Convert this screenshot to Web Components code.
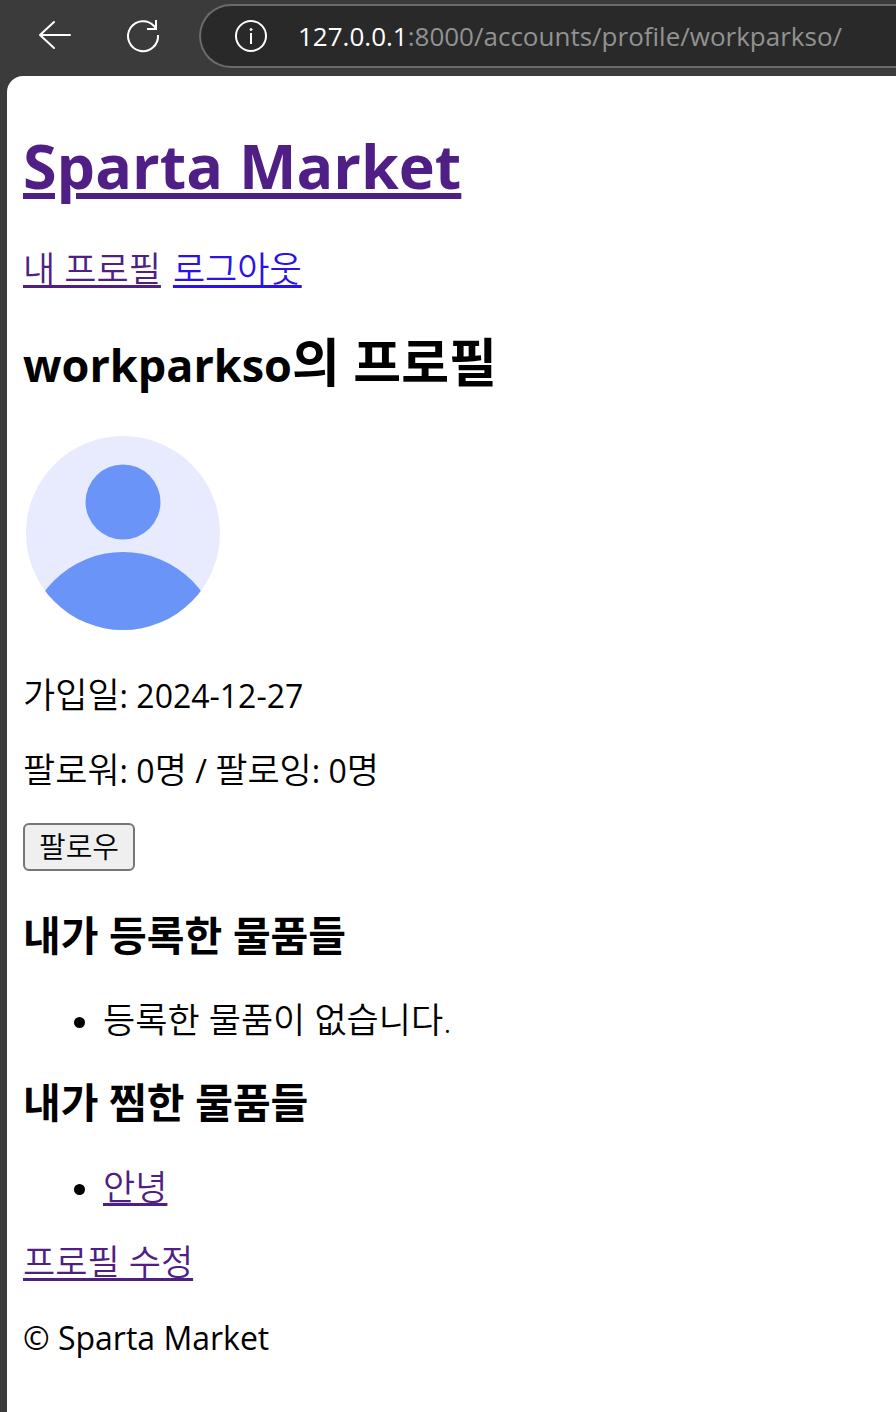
<!DOCTYPE html>
<html lang="ko">
<head>
<meta charset="utf-8">
<meta name="viewport" content="width=device-width, initial-scale=1">
<title>Sparta Market</title>
<style>
  html { background: #3b3b3b; }
  body { margin: 0; font-family: "Open Sans", "Noto Sans CJK KR", sans-serif; font-size: 32px; line-height: 43px; color: #000; }
</style>
</head>
<body>
<browser-window>
  <browser-toolbar slot="toolbar" host="127.0.0.1" path=":8000/accounts/profile/workparkso/"></browser-toolbar>
  <market-page>
    <user-profile>
      <item-list slot="items">
        <hangul-text slot="title">내가 등록한 물품들</hangul-text>
        <hangul-text>등록한 물품이 없습니다.</hangul-text>
      </item-list>
      <item-list slot="items">
        <hangul-text slot="title">내가 찜한 물품들</hangul-text>
        <page-link to="/articles/1/">안녕</page-link>
      </item-list>
    </user-profile>
  </market-page>
</browser-window>

<script>
const define = (name, html, setup) => {
  const template = document.createElement('template');
  template.innerHTML = html.trim();
  customElements.define(name, class extends HTMLElement {
    constructor() {
      super();
      this.attachShadow({ mode: 'open' }).append(template.content.cloneNode(true));
    }
    connectedCallback() { if (setup) setup(this, this.shadowRoot); }
  });
};

define('hangul-text', `
  <style>:host { display: inline; font-size: var(--hangul-size, 35px); font-weight: var(--hangul-weight, 350); line-height: 20px; }</style><slot></slot>`);

define('page-link', `
  <style>
    :host { display: inline; font-size: var(--hangul-size, 35px); font-weight: 350; line-height: 20px; }
    a { color: var(--link-color, #4f1f85); text-decoration: underline 3px; text-underline-offset: 3px; text-decoration-skip-ink: none; }
  </style><a href="#"><slot></slot></a>`,
  (el, root) => { root.querySelector('a').href = el.getAttribute('to'); });

define('browser-window', `
  <style>
    :host { display: flex; flex-direction: column; min-height: 100vh; }
    main { flex: 1; margin-left: 7px; padding: 47px 16px 16px; background: #fff; border-top-left-radius: 16px; }
  </style>
  <slot name="toolbar"></slot><main><slot></slot></main>`);

define('browser-toolbar', `
  <style>
    :host { display: flex; align-items: flex-start; height: 72px; padding: 4px 0 0 35px; overflow: hidden; color: #fff; }
    button { padding: 0; border: 0; background: none; color: inherit; width: 40px; height: 64px; margin-right: 48px; }
    .reload { margin-right: 36px; }
    svg { display: block; fill: none; stroke: currentColor; stroke-width: 2; stroke-linecap: round; stroke-linejoin: round; }
    .bar { flex: 1; display: flex; align-items: center; box-sizing: border-box; height: 64px; padding-left: 30px; border: 2px solid #6b6b6b; border-right: 0; border-radius: 32px 0 0 32px; background: #292929; }
    .info { margin-right: 27px; height: 60px; }
    .address { flex: 1; font-size: 26px; line-height: 36px; white-space: nowrap; color: #929292; outline: 0; }
    .host { color: #fff; }
  </style>
  <button aria-label="뒤로"><svg width="40" height="64" viewBox="0 0 40 64"><path d="M35 31H5M19 18L5 31l14 13"/></svg></button>
  <button class="reload" aria-label="새로 고침"><svg width="40" height="64" viewBox="0 0 40 64"><path stroke-linecap="butt" stroke-linejoin="miter" d="M35 31A15 15 0 1 1 31.500 22.500L33 25M33 16v9h-9"/></svg></button>
  <div class="bar">
    <button class="info" aria-label="사이트 정보"><svg width="40" height="60" viewBox="0 0 40 60"><circle cx="20" cy="30" r="15"/><path stroke-linecap="butt" d="M20 27v11"/><circle cx="20" cy="23.500" r="1" fill="currentColor" stroke-width="1"/></svg></button>
    <div class="address" role="textbox" aria-label="주소" contenteditable="true" spellcheck="false"><span class="host"></span><span class="path"></span></div>
  </div>`,
  (el, root) => {
    root.querySelector('.host').textContent = el.getAttribute('host');
    root.querySelector('.path').textContent = el.getAttribute('path');
  });

define('market-page', `
  <style>
    :host { display: block; }
    h1 { margin: 0 0 40px; font-size: 61px; line-height: 85px; }
    h1 a { color: #4f1f85; text-decoration: underline 6px; text-underline-offset: 4px; }
    nav ul { display: flex; gap: 12px; margin: 0; padding: 0; list-style: none; }
    .logout { --link-color: #2b12e8; }
    footer { margin-top: 32px; }
  </style>
  <header><h1><a href="/">Sparta Market</a></h1>
  <nav><ul><li><page-link to="/accounts/profile/workparkso/">내 프로필</page-link></li><li><page-link class="logout" to="/accounts/logout/">로그아웃</page-link></li></ul></nav></header>
  <slot></slot>
  <footer>© Sparta Market</footer>`);

define('profile-avatar', `
  <style>:host { display: block; width: 200px; height: 200px; } svg { display: block; }</style>
  <svg width="200" height="200" viewBox="0 0 200 200" role="img" aria-label="프로필 이미지">
    <clipPath id="c"><circle cx="100" cy="100" r="97"/></clipPath>
    <circle cx="100" cy="100" r="97" fill="#e8ebfd"/>
    <g clip-path="url(#c)" fill="#6a94f8"><circle cx="100" cy="69" r="37.5"/><circle cx="100" cy="216.500" r="97.500"/></g>
  </svg>`);

define('user-profile', `
  <style>
    :host { display: block; margin-top: 42px; }
    h2 { margin: 0 0 36px; font-size: 45px; line-height: 64px; --hangul-size: 52px; --hangul-weight: 700; }
    p { margin: 32px 0 0; }
    profile-avatar { margin-bottom: 41px; }
    .joined { margin-top: 0; }
    button { display: block; box-sizing: border-box; height: 48px; margin: 31px 0 41px; padding: 0 14px; border: 2px solid #767676; border-radius: 6px; background: #efefef; color: #000; font: 350 29px/40px "Open Sans", "Noto Sans CJK KR", sans-serif; }
  </style>
  <h2>workparkso<hangul-text>의 프로필</hangul-text></h2>
  <profile-avatar></profile-avatar>
  <p class="joined"><hangul-text>가입일</hangul-text>: 2024-12-27</p>
  <p><hangul-text>팔로워</hangul-text>: 0<hangul-text>명</hangul-text> / <hangul-text>팔로잉</hangul-text>: 0<hangul-text>명</hangul-text></p>
  <button type="button">팔로우</button>
  <slot name="items"></slot>
  <p><page-link to="/accounts/update/">프로필 수정</page-link></p>`);

define('item-list', `
  <style>
    :host { display: block; margin-bottom: 37px; }
    :host(:last-of-type) { margin-bottom: 0; }
    h3 { margin: 0 0 37px; line-height: 50px; --hangul-size: 41px; --hangul-weight: 700; }
    ul { margin: 0; padding-left: 80px; list-style: disc; }
  </style>
  <h3><slot name="title"></slot></h3>
  <ul><li><slot></slot></li></ul>`);
</script>
</body>
</html>
